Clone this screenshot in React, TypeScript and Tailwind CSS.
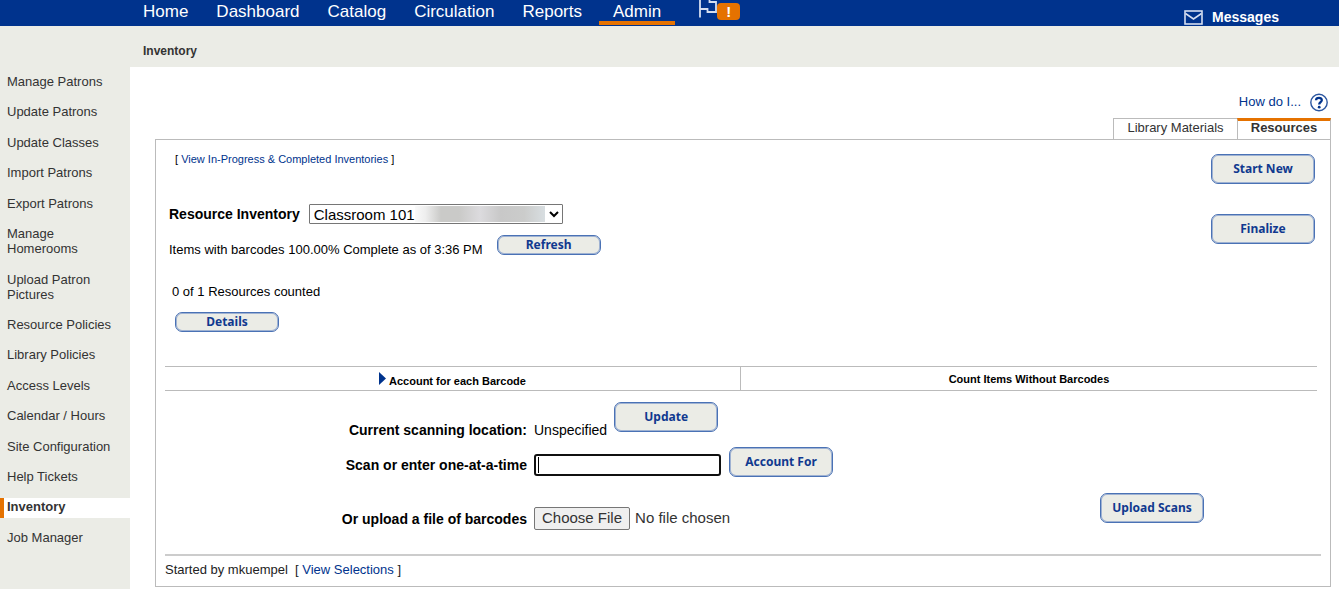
import { useState } from "react";

/* ================= TYPES ================= */
type ActionButtonProps = {
  label: string;
  small?: boolean;
};

/* ================= DATA ================= */
const navItems = ["Home", "Dashboard", "Catalog", "Circulation", "Reports", "Admin"];

const sideItems = [
  "Manage Patrons",
  "Update Patrons",
  "Update Classes",
  "Import Patrons",
  "Export Patrons",
  "Manage Homerooms",
  "Upload Patron Pictures",
  "Resource Policies",
  "Library Policies",
  "Access Levels",
  "Calendar / Hours",
  "Site Configuration",
  "Help Tickets",
  "Inventory",
  "Job Manager",
];

/* ================= PIECES ================= */
function ActionButton({ label, small }: ActionButtonProps) {
  return (
    <button
      type="button"
      className={`w-[104px] shrink-0 rounded-[7px] border border-[#4a72b5] bg-[#ebece6] pb-px font-['Noto_Sans',sans-serif] text-[12px] leading-4 font-bold text-[#10398f] shadow-[inset_0_0_0_1px_#9fb2d2] ${
        small ? "h-5" : "h-[30px]"
      }`}
    >
      {label}
    </button>
  );
}

function TopNav() {
  return (
    <header className="flex h-[26px] items-start justify-between bg-[#00338d] pr-[60px] pl-[129px] text-white">
      <nav className="flex items-start">
        {navItems.map((item) => (
          <a
            key={item}
            href="#"
            className={`h-[25px] px-[14px] text-[17px] leading-6 ${
              item === "Admin" ? "ml-[3px] border-b-4 border-[#e57200]" : ""
            }`}
          >
            {item}
          </a>
        ))}
        <a href="#" aria-label="Alerts" className="ml-[23px] flex items-start">
          <svg width="19" height="18" viewBox="0 0 19 18" fill="none" stroke="#d5def0" strokeWidth="1.8" className="shrink-0">
            <path d="M2 0V17.5M2 9H9.5V12H18V2H11.5V-1" />
          </svg>
          <span className="mt-[3px] h-[17px] w-[23px] rounded-[4px] bg-[#e57200] text-center text-[15px] leading-[17px] font-bold">
            !
          </span>
        </a>
      </nav>
      <a href="#" className="mt-[9px] flex items-center gap-[9px] text-[14px] leading-4 font-bold">
        <svg width="19" height="15" viewBox="0 0 19 15" fill="none" stroke="#d5def0" strokeWidth="1.6">
          <rect x="1" y="1" width="17" height="13" />
          <path d="M1.5 3.5L9.5 9L17.5 3.5" />
        </svg>
        Messages
      </a>
    </header>
  );
}

function SideMenu() {
  return (
    <aside className="w-[130px] shrink-0 bg-[#ebece6] pt-1.5 pb-10">
      <ul className="flex h-full flex-col justify-between text-[13px] leading-[15px] text-[#333]">
        {sideItems.map((item) => (
          <li key={item}>
            <a
              href="#"
              className={`block pt-px pr-3 pb-1 ${
                item === "Inventory"
                  ? "border-l-4 border-[#e57200] bg-white pl-[3px] font-bold"
                  : "pl-[7px]"
              }`}
            >
              {item}
            </a>
          </li>
        ))}
      </ul>
    </aside>
  );
}

/* ================= COMPONENT ================= */
export default function App() {
  const [barcode, setBarcode] = useState("");

  return (
    <div className="flex min-h-screen flex-col bg-white font-['Liberation_Sans',Arial,sans-serif] text-[13px] leading-4 text-black">
      <TopNav />

      <div className="h-[41px] bg-[#ebece6] pt-[17px] pl-[143px]">
        <h1 className="text-[12px] leading-4 font-bold text-[#333]">Inventory</h1>
      </div>

      <div className="flex flex-1">
        <SideMenu />

        <main className="min-w-0 flex-1 pt-[26px] pr-2 pb-0.5 pl-[25px]">
          {/* HELP */}
          <div className="flex justify-end pr-0.5">
            <a href="#" className="flex h-[25px] items-start gap-2 text-[#00338d]">
              <span className="leading-[17px]">How do I...</span>
              <svg width="20" height="20" viewBox="0 0 20 20" fill="none">
                <circle cx="10" cy="9.5" r="8.2" stroke="#2a559f" strokeWidth="1.4" />
                <path d="M7 7.2C7.2 4.1 13 4.1 12.8 7.2C12.7 9 10.2 9.2 10.2 11.5" stroke="#00338d" strokeWidth="2.3" />
                <circle cx="10.2" cy="14.2" r="1.4" fill="#00338d" />
              </svg>
            </a>
          </div>

          {/* TABS */}
          <div className="flex h-[21px] justify-end text-center text-[#333]">
            <a href="#" className="w-[124px] border-t border-l border-[#bbb] leading-[18px]">
              Library Materials
            </a>
            <a
              href="#"
              className="w-[94px] border-x border-t-[3px] border-x-[#bbb] border-t-[#e57200] leading-[14px] font-bold"
            >
              Resources
            </a>
          </div>

          {/* PANEL */}
          <section className="border border-[#bbb] px-[9px]">
            <div className="flex justify-between pr-1.5">
              <div className="pl-1">
                <p className="mt-[11px] pl-1.5 text-[11px]">
                  [{" "}
                  <a href="#" className="text-[#00338d]">
                    View In-Progress &amp; Completed Inventories
                  </a>{" "}
                  ]
                </p>

                <div className="mt-[37px] flex items-center gap-[9px]">
                  <label htmlFor="inventory" className="text-[14px] font-bold">
                    Resource Inventory
                  </label>
                  <div className="relative">
                    <select
                      id="inventory"
                      className="block h-5 w-[254px] rounded-[1px] border border-[#767676] bg-white text-[15px]"
                    >
                      <option>Classroom 101</option>
                    </select>
                    <span className="absolute top-0.5 left-[106px] h-4 w-[130px] bg-[linear-gradient(90deg,#fafafa_0%,#eee_8%,#cacac8_20%,#cacac8_34%,#dcdbde_50%,#c8c8c8_66%,#cbcccb_84%,#d8dee1_100%)]" />
                  </div>
                </div>

                <div className="mt-[11px] flex items-start gap-[14px]">
                  <p className="mt-[7px]">Items with barcodes 100.00% Complete as of 3:36 PM</p>
                  <ActionButton label="Refresh" small />
                </div>

                <p className="mt-[26px] pl-[3px]">0 of 1 Resources counted</p>
                <div className="mt-3 flex pl-1.5">
                  <ActionButton label="Details" small />
                </div>
              </div>

              <div className="flex flex-col gap-[30px] pt-3.5">
                <ActionButton label="Start New" />
                <ActionButton label="Finalize" />
              </div>
            </div>

            {/* MODES */}
            <div className="mt-[34px] mr-1 grid h-[25px] grid-cols-2 border-y border-[#bbb] text-center text-[11px] font-bold">
              <a href="#" className="flex justify-center gap-[3px] border-r border-[#bbb] pt-[5px]">
                <svg width="7" height="13" viewBox="0 0 7 13">
                  <path d="M0 0L7 6.5L0 13Z" fill="#00338d" />
                </svg>
                <span className="pt-px">Account for each Barcode</span>
              </a>
              <a href="#" className="pt-1">
                Count Items Without Barcodes
              </a>
            </div>

            {/* SCAN FORM */}
            <form className="pt-[11px] text-[14px]">
              <div className="flex items-end">
                <span className="w-[362px] text-right font-bold">Current scanning location:</span>
                <span className="px-[7px]">Unspecified</span>
                <div className="pb-1.5">
                  <ActionButton label="Update" />
                </div>
              </div>

              <div className="mt-[9px] flex items-center">
                <label htmlFor="barcode" className="w-[362px] pt-1.5 text-right font-bold">
                  Scan or enter one-at-a-time
                </label>
                <div className="relative mt-1.5 mr-2 ml-[7px]">
                  <input
                    id="barcode"
                    type="text"
                    value={barcode}
                    onChange={(e) => setBarcode(e.target.value)}
                    className="block h-[22px] w-[187px] rounded-[3px] border-2 border-[#101010] bg-white px-1 text-[15px] outline-none"
                  />
                  {barcode === "" && (
                    <span className="pointer-events-none absolute top-[3px] left-1 h-4 w-px bg-black" />
                  )}
                </div>
                <ActionButton label="Account For" />
              </div>

              <div className="mt-4 flex items-start">
                <label htmlFor="scan-file" className="mt-[18px] w-[362px] text-right font-bold">
                  Or upload a file of barcodes
                </label>
                <input
                  id="scan-file"
                  type="file"
                  className="mt-[13px] ml-[7px] w-[260px] text-[15px] leading-[23px] text-[#333] file:mr-[5px] file:h-[23px] file:rounded-[2px] file:border file:border-solid file:border-[#767676] file:bg-[#efefef] file:px-[7px] file:leading-5 file:text-[#333]"
                />
                <div className="mr-[117px] ml-auto">
                  <ActionButton label="Upload Scans" />
                </div>
              </div>
            </form>

            {/* FOOTER */}
            <footer className="mt-6 border-t-2 border-[#ccc] pt-1.5 pb-2 text-[#222]">
              Started by mkuempel&nbsp; [{" "}
              <a href="#" className="text-[#00338d]">
                View Selections
              </a>{" "}
              ]
            </footer>
          </section>
        </main>
      </div>
    </div>
  );
}
